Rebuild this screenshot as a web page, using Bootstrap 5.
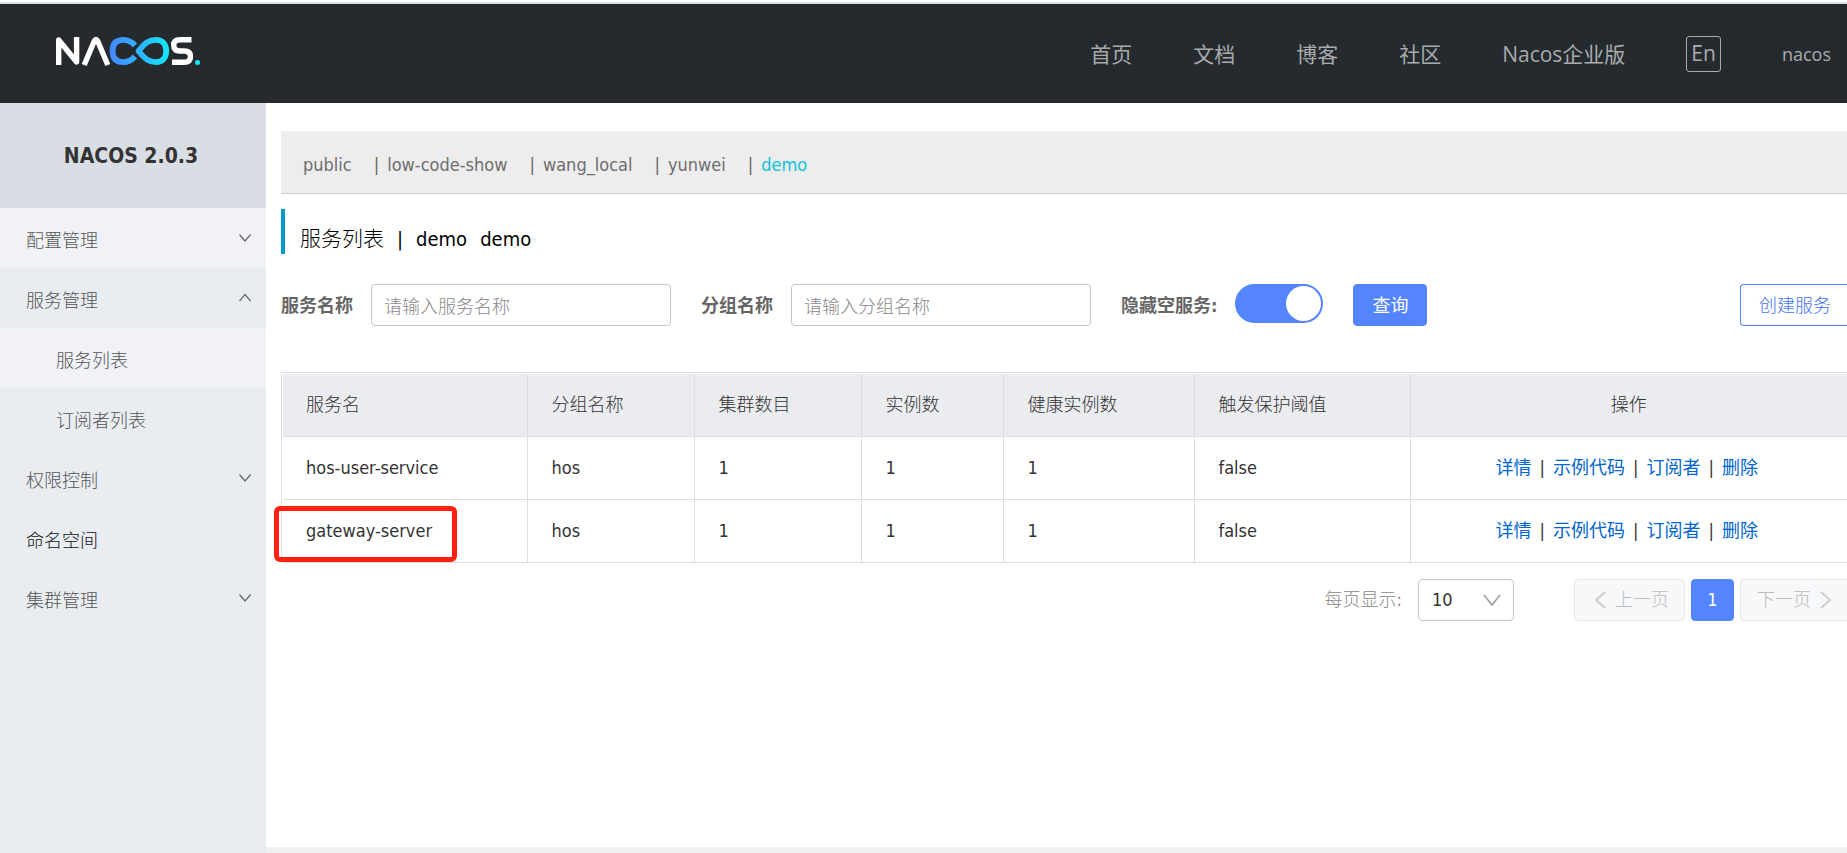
<!DOCTYPE html>
<html lang="zh-CN">
<head>
<meta charset="utf-8">
<meta name="viewport" content="width=device-width, initial-scale=1">
<title>Nacos</title>
<link href="https://cdn.jsdelivr.net/npm/bootstrap@5.3.0/dist/css/bootstrap.min.css" rel="stylesheet">
<style>
  body { font-family: "DejaVu Sans Condensed", "Noto Sans CJK SC", sans-serif; font-size: 18px; font-weight: 300; line-height: 24px; color: #333; background: #fff; }
  a { text-decoration: none; }

  .topbar { font-family: "Open Sans", "Noto Sans CJK SC", sans-serif; font-weight: 400; background: #252a2f; border-top: 2px solid #dcdedf; margin-top: 2px; height: 101px; padding: 0 16px 0 55px; }
  .topbar .menu-links { gap: 61px; font-size: 21px; line-height: 32px; }
  .topbar a, .topbar .lang-btn { color: #a8aaac; }
  .topbar .user-link { font-size: 18px; }
  .lang-btn { background: none; border: 1px solid #a8aaac; border-radius: 3px; padding: 0 4px 2px; height: 36px; line-height: 30px; }
  .logo { margin-bottom: 5px; }

  .side { width: 266px; background: #e9edf2; }
  .side h1 { height: 105px; background: #d9dde4; font-size: 21px; font-weight: 700; color: #333; padding: 2px 4px 0 0; }
  .side a { height: 60px; padding: 6px 14px 0 26px; color: #555; }
  .side a.lit { background: #f0f2f7; }
  .side a.sub { padding-left: 56px; }
  .side a.solo { color: #111; }
  .side svg { margin-top: -6px; }

  .content { padding: 28px 0 0 15px; }
  .ns-bar { background: #ededed; border-bottom: 1px solid #ccc; height: 63px; padding: 6px 22px 0; gap: 22px; }
  .ns-bar a { color: #6e6e6e; }
  .ns-bar li + li::before { content: "|"; color: #666; margin-right: 8px; }
  .ns-bar a.active { color: #0fc2de; }
  .page-title { border-left: 4px solid #09c; height: 45px; margin: 15px 0 30px; padding: 15px 0 0 15px; font-size: 21px; line-height: 28px; font-weight: 300; color: #000; gap: 13px; }
  .page-title span { font-size: 20px; }

  .filters { gap: 30px; }
  .filters label { font-weight: 700; color: #666; padding-top: 2px; }
  .filters .form-control { width: 300px; height: 42px; font-size: 18px; font-weight: 300; border-color: #c4c6cf; border-radius: 4px; padding: 2px 12px 0; color: #333; }
  .filters .form-control::placeholder { color: #888; }
  .gap-field { gap: 18px; }
  .filters .toggle { width: 88px; height: 39px; margin: 0 0 3px; border: 2px solid #5584ff; border-radius: 20px; background: #5584ff; appearance: none; }
  .toggle::after { content: ""; display: block; width: 35px; height: 35px; margin-left: auto; border-radius: 50%; background: #fff; }
  .btn-main { background: #5584ff; color: #fff; border: 1px solid #5584ff; border-radius: 4px; height: 42px; font-size: 18px; line-height: 24px; padding: 2px 18px 0; }
  .btn-line { background: #fff; color: #3f72fb; }
  .btn-line, .btn-off { font-weight: 300; }

  .grid-wrap { margin-top: 46px; border: solid #dcdee3; border-width: 1px 0 0 1px; padding: 1px 0 0 1px; }
  .svc-table { table-layout: fixed; width: 100%; }
  .svc-table th, .svc-table td { border: solid #dcdee3; border-width: 0 1px 1px 0; padding: 0 0 0 24px; color: #333; height: 63px; }
  .svc-table th:last-child, .svc-table td:last-child { border-right: 0; text-align: center; padding: 0; }
  .svc-table td:last-child { padding-right: 4px; }
  .svc-table th { height: 62px; background: #ebecf0; font-weight: 300; }
  .svc-table th:first-child, .svc-table td:first-child { padding-left: 23px; }
  .svc-table td a { color: #0065cc; font-weight: 400; }
  .svc-table .sep { margin: 0 8px; }
  .highlight { position: absolute; left: -9px; top: 6px; width: 183px; height: 56px; border: 5px solid #ff2010; border-radius: 6px; pointer-events: none; }

  .pager { margin-top: 16px; color: #888; }
  .pager .form-select { width: 96px; height: 42px; font-size: 18px; border-color: #c4c6cf; border-radius: 4px; color: #333; padding: 0 36px 0 13px; background-position: right 12px center; background-size: 18px 18px;
    background-image: url("data:image/svg+xml,%3Csvg xmlns='http://www.w3.org/2000/svg' viewBox='0 0 18 18'%3E%3Cpath d='M1 4l8 10 8-10' fill='none' stroke='%23999' stroke-width='1.5'/%3E%3C/svg%3E"); }
  .pager-btns { gap: 6px; margin-left: 60px; }
  .btn-off { gap: 9px; height: 42px; background: #f7f8fa; border: 1px solid #e6e7eb; border-radius: 4px; color: #bbb; padding: 0 15px 0 19px; }
  .btn-page { width: 43px; padding: 0; }
  .btn-edge { border-radius: 4px 0 0 4px; border-right: 0; padding-right: 16px; }
  .btn-off.btn-edge { padding: 0 15px 0 16px; }
  .foot-line { height: 6px; background: #f0f0f0; margin-left: -15px; }
</style>
</head>
<body class="d-flex flex-column min-vh-100 overflow-x-hidden">

<header class="topbar d-flex align-items-center justify-content-between">
  <a href="#" aria-label="Nacos" class="logo">
    <svg width="146" height="30" viewBox="0 0 146 30" fill="none" class="d-block">
      <defs>
        <linearGradient id="loop" x1="55" y1="0" x2="114" y2="0" gradientUnits="userSpaceOnUse">
          <stop offset="0" stop-color="#4488ff"/><stop offset=".5" stop-color="#2fb4ff"/><stop offset="1" stop-color="#12e8f8"/>
        </linearGradient>
      </defs>
      <g stroke="#fff" stroke-width="5.400" stroke-linejoin="round">
        <path d="M3.700 29V4L21.600 26V1"/>
        <path d="M29.200 29L39.300 5Q41 2 42.700 5L52.800 29"/>
        <path d="M136.500 3.700H125Q118.700 3.700 118.700 9Q118.700 15 125 15H129Q135.500 15 135.500 20.500Q135.500 26.300 129 26.300H117"/>
      </g>
      <g stroke="url(#loop)" stroke-width="5.800">
        <path d="M80 9.500C76 5 73 3.900 68.500 3.900C61 3.900 57.500 8 57.500 15S61 26.100 68.500 26.100C73 26.100 76 25 80 20.500"/>
        <path d="M83.500 15C90 7 94 3.900 101 3.900C107.500 3.900 111.200 8.500 111.200 15S107.500 26.100 101 26.100C94 26.100 90 23 83.500 15Z" stroke-linejoin="round"/>
      </g>
      <circle cx="142.500" cy="26.500" r="2.500" fill="#12e8f8"/>
    </svg>
  </a>
  <nav class="menu-links d-flex align-items-center">
    <a href="#">首页</a>
    <a href="#">文档</a>
    <a href="#">博客</a>
    <a href="#">社区</a>
    <a href="#">Nacos企业版</a>
    <button type="button" class="lang-btn">En</button>
    <a href="#" class="user-link">nacos</a>
  </nav>
</header>

<div class="d-flex flex-grow-1">
  <aside class="side flex-shrink-0">
    <h1 class="d-flex align-items-center justify-content-center m-0">NACOS 2.0.3</h1>
    <nav>
      <a href="#" class="lit d-flex align-items-center justify-content-between">配置管理
        <svg width="14" height="10" fill="none" stroke="#666" stroke-width="1.200"><path d="M1.500 1.500L7 8l5.500-6.500"/></svg></a>
      <a href="#" class="d-flex align-items-center justify-content-between">服务管理
        <svg width="14" height="10" fill="none" stroke="#666" stroke-width="1.200"><path d="M1.500 8L7 1.500 12.500 8"/></svg></a>
      <a href="#" class="lit sub d-flex align-items-center">服务列表</a>
      <a href="#" class="sub d-flex align-items-center">订阅者列表</a>
      <a href="#" class="d-flex align-items-center justify-content-between">权限控制
        <svg width="14" height="10" fill="none" stroke="#666" stroke-width="1.200"><path d="M1.500 1.500L7 8l5.500-6.500"/></svg></a>
      <a href="#" class="solo d-flex align-items-center">命名空间</a>
      <a href="#" class="d-flex align-items-center justify-content-between">集群管理
        <svg width="14" height="10" fill="none" stroke="#666" stroke-width="1.200"><path d="M1.500 1.500L7 8l5.500-6.500"/></svg></a>
    </nav>
  </aside>

  <main class="content d-flex flex-column flex-grow-1">
    <ul class="ns-bar list-unstyled d-flex align-items-center m-0">
      <li><a href="#">public</a></li>
      <li><a href="#">low-code-show</a></li>
      <li><a href="#">wang_local</a></li>
      <li><a href="#">yunwei</a></li>
      <li><a href="#" class="active">demo</a></li>
    </ul>

    <h2 class="page-title d-flex align-items-center">服务列表<span>|</span><span>demo</span><span>demo</span></h2>

    <form class="filters d-flex align-items-center">
      <div class="d-flex align-items-center gap-field">
        <label for="svc">服务名称</label>
        <input id="svc" type="text" class="form-control" placeholder="请输入服务名称">
      </div>
      <div class="d-flex align-items-center gap-field">
        <label for="grp">分组名称</label>
        <input id="grp" type="text" class="form-control" placeholder="请输入分组名称">
      </div>
      <div class="d-flex align-items-center gap-field">
        <label for="hide">隐藏空服务:</label>
        <input id="hide" type="checkbox" role="switch" class="toggle" checked>
      </div>
      <button type="button" class="btn-main">查询</button>
      <button type="button" class="btn-main btn-line btn-edge ms-auto">创建服务</button>
    </form>

    <div class="grid-wrap">
      <table class="svc-table">
        <colgroup>
          <col style="width:244px"><col style="width:167px"><col style="width:167px"><col style="width:142px"><col style="width:191px"><col style="width:216px"><col>
        </colgroup>
        <thead>
          <tr><th>服务名</th><th>分组名称</th><th>集群数目</th><th>实例数</th><th>健康实例数</th><th>触发保护阈值</th><th>操作</th></tr>
        </thead>
        <tbody>
          <tr>
            <td>hos-user-service</td><td>hos</td><td>1</td><td>1</td><td>1</td><td>false</td>
            <td><a href="#">详情</a><span class="sep">|</span><a href="#">示例代码</a><span class="sep">|</span><a href="#">订阅者</a><span class="sep">|</span><a href="#">删除</a></td>
          </tr>
          <tr>
            <td class="position-relative">gateway-server<span class="highlight"></span></td><td>hos</td><td>1</td><td>1</td><td>1</td><td>false</td>
            <td><a href="#">详情</a><span class="sep">|</span><a href="#">示例代码</a><span class="sep">|</span><a href="#">订阅者</a><span class="sep">|</span><a href="#">删除</a></td>
          </tr>
        </tbody>
      </table>
    </div>

    <div class="pager d-flex align-items-center justify-content-end">
      <label for="size" class="me-3">每页显示:</label>
      <select id="size" class="form-select"><option>10</option></select>
      <div class="pager-btns d-flex">
        <button type="button" class="btn-off d-flex align-items-center" disabled>
          <svg width="12" height="18" fill="none" stroke="#ccc" stroke-width="2"><path d="M11 1L2 9l9 8"/></svg>上一页</button>
        <button type="button" class="btn-main btn-page">1</button>
        <button type="button" class="btn-off btn-edge d-flex align-items-center" disabled>下一页
          <svg width="12" height="18" fill="none" stroke="#ccc" stroke-width="2"><path d="M1 1l9 8-9 8"/></svg></button>
      </div>
    </div>

    <div class="foot-line mt-auto"></div>
  </main>
</div>

<script src="https://cdn.jsdelivr.net/npm/bootstrap@5.3.0/dist/js/bootstrap.bundle.min.js"></script>
</body>
</html>
